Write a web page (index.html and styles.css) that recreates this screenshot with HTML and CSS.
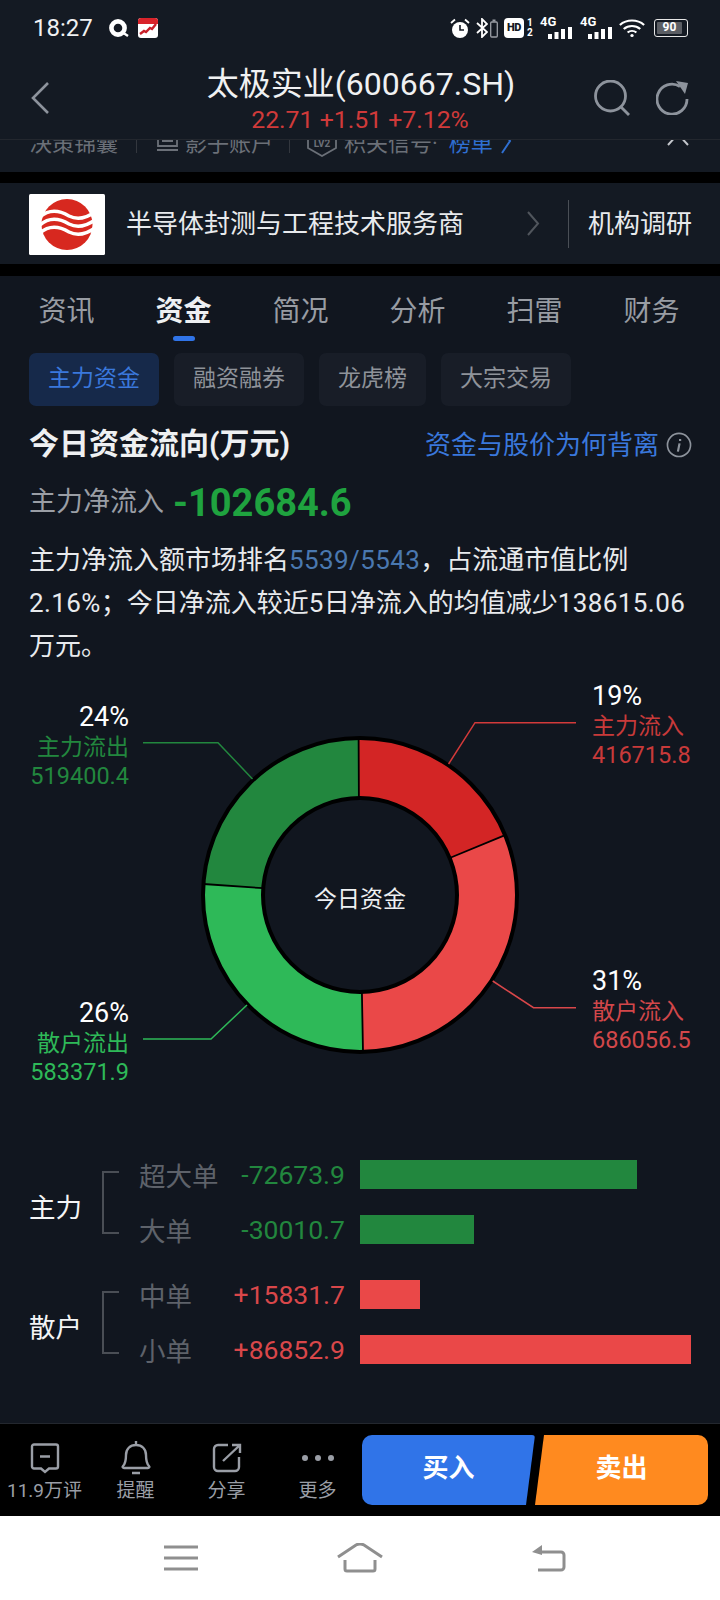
FILE: index.html
```html
<!DOCTYPE html>
<html lang="zh-CN">
<head>
<meta charset="utf-8">
<title>太极实业</title>
<link rel="stylesheet" href="styles.css">
</head>
<body>
<div class="page">
  <header class="top">
    <div class="status">
      <span class="clock">18:27</span>
      <svg class="st-q" viewBox="0 0 20 18"><circle cx="9" cy="9" r="6.600" fill="none" stroke="#fff" stroke-width="4.600"/><path d="M13 13l6 4" stroke="#fff" stroke-width="2.400"/></svg>
      <svg class="st-cal" viewBox="0 0 20 20"><rect width="20" height="20" rx="3" fill="#fff"/><path d="M0 6V3a3 3 0 0 1 3-3h14a3 3 0 0 1 3 3v3z" fill="#d8232a"/><path d="M2 16l4-3 2 1 4-4 2 1 4-5" fill="none" stroke="#c8202a" stroke-width="2.400"/></svg>
      <span class="grow"></span>
      <svg class="st-ic" width="20" height="21" viewBox="0 0 20 21"><circle cx="10" cy="12" r="8" fill="#fff"/><path d="M10 7v5h4" fill="none" stroke="#141a23" stroke-width="1.600"/><path d="M1 5l4-3.500M19 5l-4-3.500" stroke="#fff" stroke-width="1.800"/></svg>
      <svg class="st-ic st-bt" width="12" height="20" viewBox="0 0 12 20"><path d="M1 5l10 9-5 5V1l5 5L1 15" fill="none" stroke="#fff" stroke-width="1.800"/></svg>
      <svg class="st-ic st-mini" width="8" height="19" viewBox="0 0 8 19"><rect x=".7" y="3" width="6.600" height="15" rx="1" fill="none" stroke="#9a9ea5" stroke-width="1.300"/><rect x="2.500" y=".5" width="3" height="2" fill="#9a9ea5"/></svg>
      <span class="st-hd">HD</span>
      <span class="st-sim"><i>1</i><i>2</i></span>
      <span class="st-net"><b>4G</b><svg width="24" height="12" viewBox="0 0 24 12"><path d="M0 7h4v5H0zM6.500 5h4v7h-4zM13 2h4v10h-4zM20 0h4v12h-4z" fill="#fff"/></svg></span>
      <span class="st-net"><b>4G</b><svg width="24" height="12" viewBox="0 0 24 12"><path d="M0 7h4v5H0zM6.500 5h4v7h-4zM13 2h4v10h-4zM20 0h4v12h-4z" fill="#fff"/></svg></span>
      <svg class="st-ic st-wifi" width="24" height="18" viewBox="0 0 24 18"><path d="M1 6a16 16 0 0 1 22 0M4.500 10a11 11 0 0 1 15 0M8 13.500a6 6 0 0 1 8 0" fill="none" stroke="#fff" stroke-width="2"/><circle cx="12" cy="16.500" r="1.500" fill="#fff"/></svg>
      <span class="st-bat"><span>90</span></span>
    </div>
    <div class="nav">
      <svg class="nav-back" width="20" height="34" viewBox="0 0 20 34"><path d="M18 2L3 17l15 15" fill="none" stroke="#8d939c" stroke-width="2.600"/></svg>
      <div class="nav-title">
        <div class="name">太极实业(600667.SH)</div>
        <div class="quote">22.71 +1.51 +7.12%</div>
      </div>
      <svg class="nav-search" width="38" height="36" viewBox="0 0 38 36"><circle cx="17.500" cy="16" r="15" fill="none" stroke="#8d939c" stroke-width="2.800"/><path d="M28 27l8 8" stroke="#8d939c" stroke-width="2.800"/></svg>
      <svg class="nav-refresh" width="33" height="34" viewBox="0 0 33 34"><path d="M24 5.500A15 15 0 1 0 31 18" fill="none" stroke="#8d939c" stroke-width="2.800"/><path d="M20 0l12 2-3 11z" fill="#8d939c"/></svg>
    </div>
  </header>

  <div class="strip">
    <div class="strip-row">
      <span class="strip-t first">决策锦囊</span>
      <i class="strip-sep"></i>
      <svg class="strip-ic" width="23" height="22" viewBox="0 0 23 22"><path d="M2 0v16h19V0M6 11h11M6 6h11M1 20h21" fill="none" stroke="#6b7078" stroke-width="1.800"/></svg>
      <span class="strip-t">影子账户</span>
      <i class="strip-sep"></i>
      <svg class="strip-ic lv" width="30" height="30" viewBox="0 0 30 30"><path d="M1 3v18l14 8 14-8V3" fill="none" stroke="#6b7078" stroke-width="1.800"/><text class="lv-text" x="15" y="20" text-anchor="middle">LV2</text></svg>
      <span class="strip-t">积关信号·</span><span class="strip-link">榜单</span>
      <svg class="strip-go" width="11" height="26" viewBox="0 0 11 26"><path d="M1 1l8 12-8 12" fill="none" stroke="#2f6fd1" stroke-width="2"/></svg>
      <span class="grow"></span>
      <svg class="strip-x" width="22" height="14" viewBox="0 0 22 14"><path d="M1 13L11 2l10 11" fill="none" stroke="#c4c7cc" stroke-width="2"/></svg>
    </div>
  </div>

  <section class="card">
    <svg class="logo" width="76" height="61" viewBox="0 0 76 61"><rect width="76" height="61" rx="1.500" fill="#fff"/><ellipse cx="38" cy="30.500" rx="25.500" ry="25.500" fill="#d7281f"/><path d="M11 23C20 15 30 16 40 22c8 4 16 3 26-4M11 31c9-8 19-7 29-1 8 4 16 3 26-4M11 39c9-8 19-7 29-1 8 4 16 3 26-4" fill="none" stroke="#fff" stroke-width="3.400"/></svg>
    <span class="card-text">半导体封测与工程技术服务商</span>
    <svg class="card-arrow" width="13" height="25" viewBox="0 0 13 25"><path d="M1 1l10 11.500L1 24" fill="none" stroke="#50555c" stroke-width="2"/></svg>
    <i class="card-sep"></i>
    <span class="card-side">机构调研</span>
  </section>

  <main class="main">
    <nav class="tabs">
      <span class="tab">资讯</span>
      <span class="tab on">资金</span>
      <span class="tab">简况</span>
      <span class="tab">分析</span>
      <span class="tab">扫雷</span>
      <span class="tab">财务</span>
    </nav>
    <div class="subtabs">
      <span class="sub on w130">主力资金</span>
      <span class="sub w130">融资融券</span>
      <span class="sub w107">龙虎榜</span>
      <span class="sub w130">大宗交易</span>
    </div>
    <div class="title-row">
      <h2 class="title">今日资金流向(万元)</h2>
      <span class="link">资金与股价为何背离</span>
      <svg class="info" width="24" height="24" viewBox="0 0 24 24"><circle cx="12" cy="12" r="10.500" fill="none" stroke="#8d939c" stroke-width="1.500"/><path d="M13 6.500v1.800M12.500 10.500L11 18" stroke="#8d939c" stroke-width="2"/></svg>
    </div>
    <div class="net-row">
      <span class="net-label">主力净流入</span>
      <span class="net-val">-102684.6</span>
    </div>
    <p class="para">主力净流入额市场排名<span class="rank num">5539/5543</span>，占流通市值比例<br><span class="num">2.16%</span>；今日净流入较近<span class="num">5</span>日净流入的均值减少<span class="num">138615.06</span><br>万元。</p>

    <div class="chart">
      <svg class="donut" width="720" height="444" viewBox="0 666 720 444">
        <path d="M358.600 738A157 157 0 0 1 505.100 835.200L449.700 858A97 97 0 0 0 358.900 798Z" fill="#d32525"/>
        <path d="M505.100 835.200A157 157 0 0 1 363 1052L361.900 992A97 97 0 0 0 449.700 858Z" fill="#ea4848"/>
        <path d="M363 1052A157 157 0 0 1 203.400 884L263.200 888.200A97 97 0 0 0 361.900 992Z" fill="#2eb958"/>
        <path d="M203.400 884A157 157 0 0 1 358.600 738L358.900 798A97 97 0 0 0 263.200 888.200Z" fill="#22873e"/>
        <g fill="none" stroke="#000" stroke-width="1.800">
          <path d="M358.600 738L358.900 798M505.100 835.200L449.700 858M363 1052L361.900 992M203.400 884L263.200 888.200"/>
        </g>
        <circle cx="360" cy="895" r="157" fill="none" stroke="#000" stroke-width="4"/>
        <circle cx="360" cy="895" r="97" fill="none" stroke="#000" stroke-width="4"/>
        <g fill="none" stroke-width="1.500">
          <path d="M576 722.700H475L448.600 764" stroke="#d33a3a"/>
          <path d="M576 1007.700H533.500L492.700 981" stroke="#d9474a"/>
          <path d="M143 742.700H218L252.500 779" stroke="#22873e"/>
          <path d="M143 1039H211L247 1005" stroke="#2eb958"/>
        </g>
      </svg>
      <div class="center-text">今日资金</div>
      <div class="lab right r1"><b>19%</b><span class="c-red1">主力流入</span><span class="c-red1 lab-num">416715.8</span></div>
      <div class="lab right r2"><b>31%</b><span class="c-red2">散户流入</span><span class="c-red2 lab-num">686056.5</span></div>
      <div class="lab left l1"><b>24%</b><span class="c-gr1">主力流出</span><span class="c-gr1 lab-num">519400.4</span></div>
      <div class="lab left l2"><b>26%</b><span class="c-gr2">散户流出</span><span class="c-gr2 lab-num">583371.9</span></div>
    </div>

    <div class="groups">
      <div class="group">
        <div class="g-name">主力</div>
        <i class="bracket"></i>
        <div class="g-rows">
          <div class="row"><span class="r-name">超大单</span><span class="r-val neg">-72673.9</span><div class="bar neg-bar" style="width:277px"></div></div>
          <div class="row"><span class="r-name">大单</span><span class="r-val neg">-30010.7</span><div class="bar neg-bar" style="width:114px"></div></div>
        </div>
      </div>
      <div class="group">
        <div class="g-name">散户</div>
        <i class="bracket"></i>
        <div class="g-rows">
          <div class="row"><span class="r-name">中单</span><span class="r-val pos">+15831.7</span><div class="bar pos-bar" style="width:60px"></div></div>
          <div class="row"><span class="r-name">小单</span><span class="r-val pos">+86852.9</span><div class="bar pos-bar" style="width:331px"></div></div>
        </div>
      </div>
    </div>
  </main>

  <footer class="foot">
    <div class="f-item">
      <svg width="30" height="30" viewBox="0 0 30 30"><path d="M4 1.500h22a2 2 0 0 1 2 2v20a2 2 0 0 1-2 2h-7l-4 3.500-4-3.500H4a2 2 0 0 1-2-2v-20a2 2 0 0 1 2-2zM10 13.500h10" fill="none" stroke="#9a9ea6" stroke-width="2.400"/></svg>
      <span>11.9万评</span>
    </div>
    <div class="f-item">
      <svg width="32" height="36" viewBox="0 0 32 36"><path d="M16 1v4M3 26c3-3 3-7 3-11 0-6 4-10 10-10s10 4 10 10c0 4 0 8 3 11 1 1 0 2-1 2H4c-1 0-2-1-1-2zM12 33h8" fill="none" stroke="#9a9ea6" stroke-width="2.400"/></svg>
      <span>提醒</span>
    </div>
    <div class="f-item">
      <svg width="30" height="30" viewBox="0 0 30 30"><path d="M16 2H6a4 4 0 0 0-4 4v18a4 4 0 0 0 4 4h17a4 4 0 0 0 4-4V14M11 18L28 2M20 2h8v8" fill="none" stroke="#9a9ea6" stroke-width="2.400"/></svg>
      <span>分享</span>
    </div>
    <div class="f-item">
      <svg width="32" height="30" viewBox="0 0 32 30"><circle cx="3" cy="15" r="3" fill="#9a9ea6"/><circle cx="16" cy="15" r="3" fill="#9a9ea6"/><circle cx="29" cy="15" r="3" fill="#9a9ea6"/></svg>
      <span>更多</span>
    </div>
    <div class="trade">
      <span class="btn buy">买入</span>
      <span class="btn sell">卖出</span>
    </div>
  </footer>

  <div class="sysnav">
    <svg width="34" height="26" viewBox="0 0 34 26"><path d="M0 2h34M0 13h34M0 24h34" stroke="#8f8f8f" stroke-width="3"/></svg>
    <svg class="sys-home" width="46" height="30" viewBox="0 0 46 30"><path d="M1 14L19 2c3-1.500 5-1.500 8 0l18 12M8 17v9a2 2 0 0 0 2 2h26a2 2 0 0 0 2-2v-9" fill="none" stroke="#8f8f8f" stroke-width="3"/></svg>
    <svg width="34" height="28" viewBox="0 0 34 28"><path d="M10 8h19a3 3 0 0 1 3 3v12a3 3 0 0 1-3 3H6" fill="none" stroke="#8f8f8f" stroke-width="3"/><path d="M0 8l10-7v10z" fill="#8f8f8f"/></svg>
  </div>
</div>
</body>
</html>
```
FILE: styles.css
```css
* { box-sizing: border-box; }
html, body { margin: 0; padding: 0; }
body {
  width: 720px;
  height: 1600px;
  overflow: hidden;
  background: #000;
  font-family: Roboto, "Noto Sans CJK SC", sans-serif;
  color: #e8eaed;
}
.page { width: 720px; height: 1600px; display: flex; flex-direction: column; overflow: hidden; }
.grow { flex: 1; }

/* top */
.top { position: relative; z-index: 2; background: #141a23; border-bottom: 1px solid #23272e; height: 140px; flex: none; }
.status { height: 50px; display: flex; align-items: center; padding: 6px 32px 0 33px; }
.clock { font-size: 24px; color: #f0f1f2; width: 76px; line-height: 1; }
.st-q { width: 20px; height: 18px; }
.st-cal { width: 20px; height: 20px; margin-left: 9px; }
.st-ic { flex: none; display: block; }
.st-bt { margin-left: 6px; }
.st-mini { margin-left: 2px; }
.st-hd { margin-left: 6px; width: 20px; height: 20px; border-radius: 4px; background: #fff; color: #141a23; font-size: 11px; font-weight: 900; line-height: 20px; text-align: center; letter-spacing: -0.5px; }
.st-sim { margin-left: 3px; width: 7px; display: flex; flex-direction: column; }
.st-sim i { font-style: normal; font-size: 10px; line-height: 10px; font-weight: 700; color: #fff; }
.st-net { margin-left: 6px; width: 32px; height: 22px; display: flex; flex-direction: column; }
.st-net + .st-net { margin-left: 8px; }
.st-net b { font-size: 13px; line-height: 10px; color: #fff; }
.st-net svg { margin-left: 8px; display: block; }
.st-wifi { margin-left: 8px; transform: scaleX(1.100); }
.st-bat { margin-left: 10px; width: 34px; height: 18px; border: 1.5px solid #e6e6e6; border-radius: 3px; padding: 2px; display: flex; }
.st-bat span { flex: none; width: 25px; background: #5b5e64; color: #fff; font-size: 12px; font-weight: 700; line-height: 11px; text-align: center; border-radius: 1px; }

.nav { height: 89px; display: flex; align-items: center; position: relative; padding-left: 30px; }
.nav-back { margin-top: 7px; }
.nav-title { position: absolute; left: 0; right: 0; top: 14px; text-align: center; }
.name { font-size: 32px; line-height: 40px; color: #f0f1f2; padding-left: 2px; }
.quote { font-size: 24.8px; line-height: 28px; margin-top: 2px; color: #d03a3a; }
.nav-search { margin-left: 543px; margin-top: 6px; }
.nav-refresh { margin-left: 25px; margin-top: 7px; }

/* clipped strip */
.strip { height: 32px; flex: none; background: #141a23; overflow: hidden; }
.strip-row { display: flex; align-items: center; height: 30px; margin-top: -14px; padding: 0 31px 0 30px; font-size: 22px; color: #6b7078; }
.strip-t.first { width: 90px; }
.strip-sep { width: 1px; height: 24px; background: #33373e; margin: 0 16px; flex: none; }
.strip-ic { flex: none; margin: 0 6px 0 3px; }
.strip-ic.lv { margin: 2px 7px 0 1px; }
.lv-text { font-size: 10px; font-weight: 700; fill: #6b7078; }
.strip-link { color: #2f6fd1; margin-left: 11px; }
.strip-go { flex: none; margin-left: 8px; }
.strip-x { flex: none; margin-top: -4px; }

/* card */
.card { margin-top: 11px; height: 81px; flex: none; background: #141a23; display: flex; align-items: center; padding-left: 29px; }
.logo { flex: none; margin-top: 1px; }
.card-text { font-size: 26px; margin: -4px 0 0 21px; width: 401px; color: #e8eaed; white-space: nowrap; }
.card-arrow { flex: none; }
.card-sep { width: 1px; height: 48px; background: #4a4f56; margin-left: 28px; flex: none; }
.card-side { font-size: 26px; margin: -5px 0 0 19px; color: #e8eaed; white-space: nowrap; }

/* main */
.main { margin-top: 12px; flex: 1; background: #11161f; min-height: 0; }
.tabs { display: grid; grid-template-columns: repeat(6, 117px); margin-left: 8px; height: 65px; }
.tab { position: relative; font-size: 28px; line-height: 72px; height: 65px; text-align: center; color: #989ca3; }
.tab.on { color: #eef0f2; font-weight: 700; }
.tab.on::after { content: ""; position: absolute; left: 48px; top: 60px; width: 22px; height: 5px; border-radius: 3px; background: #3074e8; }
.subtabs { display: flex; gap: 15px; margin: 12px 0 0 29px; }
.sub { height: 53px; line-height: 52px; border-radius: 7px; background: #181d27; color: #8f939a; font-size: 23px; text-align: center; }
.sub.w130 { width: 130px; }
.sub.w107 { width: 107px; }
.sub.on { background: #16294a; color: #3a78dc; }
.title-row { display: flex; align-items: center; height: 40px; margin: 17px 0 0 29px; }
.title { margin: 2px 0 0; font-size: 30px; line-height: 40px; font-weight: 700; color: #eef0f2; width: 396px; white-space: nowrap; }
.link { font-size: 26px; margin-top: -2px; color: #3a78dc; white-space: nowrap; }
.info { margin: 3px 0 0 8px; flex: none; transform: scale(1.100); }
.net-row { display: flex; align-items: center; height: 44px; margin: 18px 0 0 29px; }
.net-label { font-size: 27px; color: #9a9ea5; width: 144px; margin-bottom: 7px; white-space: nowrap; }
.net-val { font-size: 38px; font-weight: 700; color: #1fa33f; }
.para { margin: 14px 0 0 29px; font-size: 26px; line-height: 43px; color: #e8eaed; white-space: nowrap; }
.num { letter-spacing: 0.4px; }
.rank { color: #4a78b0; }

/* chart canvas */
.chart { position: relative; width: 720px; height: 444px; margin-top: -2px; }
.donut { display: block; }
.center-text { position: absolute; left: 260px; width: 200px; top: 217px; text-align: center; font-size: 23px; line-height: 34px; color: #eef0f2; }
.lab { position: absolute; display: flex; flex-direction: column; font-size: 23px; line-height: 29px; white-space: nowrap; }
.lab-num { font-size: 23.500px; }
.lab b { font-weight: 400; font-size: 27px; line-height: 31px; color: #fff; }
.lab.left { align-items: flex-end; right: 591px; }
.lab.right { left: 592px; }
.r1 { top: 15px; }
.r2 { top: 300px; }
.l1 { top: 36px; }
.l2 { top: 332px; }
.c-red1 { color: #c83a3a; }
.c-red2 { color: #d2474a; }
.c-gr1 { color: #22873e; }
.c-gr2 { color: #2eb958; }

/* bars */
.groups { margin-top: 50px; display: flex; flex-direction: column; gap: 36px; }
.group { display: flex; padding-left: 29px; }
.g-name { width: 73px; font-size: 26.500px; line-height: 36px; padding-top: 30px; color: #f4f5f6; flex: none; }
.bracket { flex: none; width: 17px; height: 63px; margin-top: 11px; border: 2px solid #4a4e55; border-right: 0; }
.g-rows { margin-left: 20px; display: flex; flex-direction: column; gap: 26px; }
.row { display: flex; align-items: center; height: 29px; }
.r-name { width: 80px; font-size: 26.500px; color: #5e626a; white-space: nowrap; }
.r-val { width: 126px; text-align: right; font-size: 26.500px; }
.neg { color: #22873e; }
.pos { color: #d9474a; }
.bar { height: 29px; margin-left: 15px; flex: none; }
.neg-bar { background: #22873e; }
.pos-bar { background: #ea4848; }

/* footer */
.foot { height: 93px; flex: none; background: #000; border-top: 1px solid #23272e; display: flex; }
.f-item { width: 91px; flex: none; display: flex; flex-direction: column; align-items: center; height: 92px; color: #9a9ea6; font-size: 19px; position: relative; left: -1px; }
.f-item svg { display: block; margin-top: 16px; height: 36px; }
.f-item span { line-height: 28px; margin-top: 1px; white-space: nowrap; }
.trade { display: flex; margin-left: -2px; margin-top: 11px; }
.btn { height: 70px; line-height: 66px; text-align: center; color: #fff; font-size: 26px; font-weight: 700; }
.buy { width: 173px; background: #3074e8; border-radius: 10px 3px 0 10px; clip-path: polygon(0 0, 100% 0, 94.8% 100%, 0 100%); }
.sell { width: 173px; background: #ff8a1f; border-radius: 0 10px 10px 0; clip-path: polygon(5.200% 0, 100% 0, 100% 100%, 0 100%); }

/* system nav */
.sysnav { height: 84px; flex: none; background: #fff; display: flex; align-items: center; padding-left: 164px; }
.sys-home { margin-left: 139px; }
.sysnav svg:last-child { margin-left: 149px; }
```
